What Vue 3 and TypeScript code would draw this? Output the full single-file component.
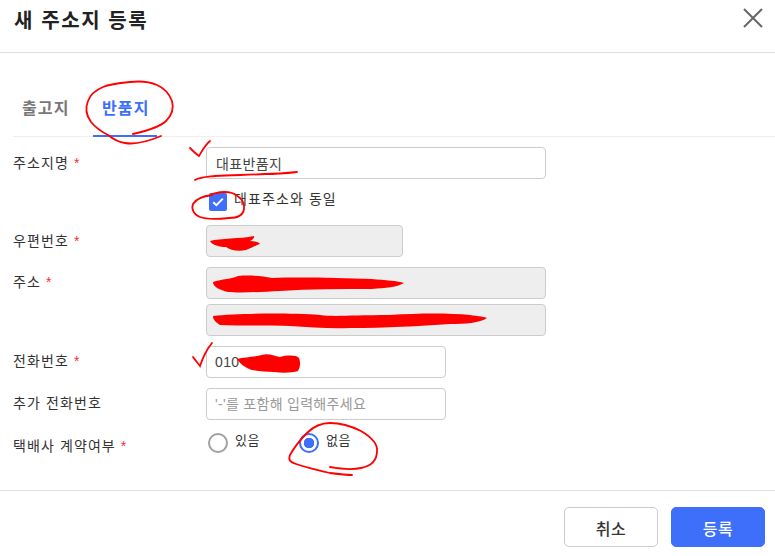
<script setup lang="ts">
interface Tab { label: string; active: boolean }
const tabs: Tab[] = [
  { label: '출고지', active: false },
  { label: '반품지', active: true },
]
const loops: string[] = [
  'M133 134C146 131 160 127 166 121C172 115 174 108 172 101C169 93 164 88 157 85C148 81 139 81 130 82C120 83 110 84 103 87C96 90 90 95 88 101C85 108 86 115 91 122C96 128 102 132 108 135C113 139 118 142 125 143C136 145 149 141 161 136',
  'M190 148C193 151 196 154 199 156C202 151 205 145 210 141',
  'M195 180C200 177 205 177 215 176C232 175 250 175 265 174C276 174 288 173 297 172',
  'M212 195C204 196 196 199 193 204C191 209 194 215 200 217C208 220 219 219 229 218C237 218 243 216 244 209C245 202 240 196 232 193C225 191 215 192 208 196',
  'M193 357C195 360 198 363 200 366C203 357 207 349 212 343',
  'M330 467C341 469 352 470 361 468C371 466 377 460 377 451C378 443 371 437 361 431C351 426 342 423 330 423C322 423 313 427 307 433C300 440 295 446 290 455C288 460 290 462 296 464C307 468 319 470 330 473C338 474 346 475 352 475',
]
const blobs: string[] = [
  'M210 241C220 238 240 239 254 236C255 238 252 240 250 241C254 241 259 242 260 244C254 246 252 248 246 250C238 252 230 250 226 247C220 247 212 245 210 241Z',
  'M213 282C222 279 232 279 238 276C250 275 262 276 272 278C300 277 340 278 372 279C385 280 398 281 404 283C398 287 385 288 372 289C340 289 310 289 280 291C262 292 240 293 228 292C220 290 213 287 213 282Z',
  'M213 316C240 313 290 313 320 315C335 317 350 315 390 315C420 313 450 313 470 315C478 316 486 317 487 318C480 323 465 324 450 324C420 326 385 328 350 328C330 329 310 327 290 326C270 325 240 326 220 325C216 322 213 320 213 316Z',
  'M237 359C245 357 255 357 262 355C268 353 274 356 280 357C288 355 296 355 299 358C301 363 300 368 298 371C292 373 282 373 274 372C265 372 258 371 252 370C246 368 240 364 237 359Z',
]
</script>

<template>
  <div class="dialog">
    <header class="head">
      <h1 class="title">새 주소지 등록</h1>
      <button class="close" type="button" aria-label="닫기">
        <svg width="20" height="20" viewBox="0 0 20 20">
          <path d="M1 1L19 19M19 1L1 19" fill="none" stroke="#666" stroke-width="2" />
        </svg>
      </button>
    </header>

    <nav class="tabs">
      <span v-for="tab in tabs" :key="tab.label" class="tab" :class="{ active: tab.active }">{{ tab.label }}</span>
    </nav>

    <form class="form" @submit.prevent>
      <div class="row">
        <label class="label tall">주소지명 <em>*</em></label>
        <input class="field wide" value="대표반품지" />
      </div>
      <div class="row check-row">
        <span></span>
        <label class="check">
          <span class="box">
            <svg width="12" height="10" viewBox="0 0 12 10">
              <path d="M1.2 5.2L4.4 8.2L10.8 1.6" fill="none" stroke="#fff" stroke-width="2" />
            </svg>
          </span>
          <span class="check-text">대표주소와 동일</span>
        </label>
      </div>
      <div class="row postal-row">
        <label class="label tall">우편번호 <em>*</em></label>
        <input class="field short off" readonly />
      </div>
      <div class="row addr-row">
        <label class="label">주소 <em>*</em></label>
        <div class="stack">
          <input class="field wide off" readonly />
          <input class="field wide off" readonly />
        </div>
      </div>
      <div class="row next">
        <label class="label">전화번호 <em>*</em></label>
        <input class="field mid" value="010" />
      </div>
      <div class="row next">
        <label class="label">추가 전화번호</label>
        <input class="field mid" placeholder="'-'를 포함해 입력해주세요" />
      </div>
      <div class="row radio-row">
        <label class="label">택배사 계약여부 <em>*</em></label>
        <div class="radios">
          <label class="radio"><span class="dot"></span><span class="radio-text">있음</span></label>
          <label class="radio"><span class="dot on"></span><span class="radio-text">없음</span></label>
        </div>
      </div>
    </form>

    <footer class="foot">
      <button class="btn" type="button">취소</button>
      <button class="btn primary" type="button">등록</button>
    </footer>

    <svg class="marks" width="775" height="556" viewBox="0 0 775 556">
      <path v-for="d in loops" :key="d" :d="d" fill="none" stroke="#f00" stroke-width="1.8" stroke-linecap="round" />
      <path v-for="d in blobs" :key="d" :d="d" fill="#f00" />
    </svg>
  </div>
</template>

<style scoped>
.dialog {
  position: relative;
  width: 775px;
  height: 556px;
  overflow: hidden;
  background: #fff;
  color: #333;
  font-family: "Liberation Sans", "Noto Sans CJK KR", sans-serif;
  font-size: 14px;
}
.head {
  height: 53px;
  box-sizing: border-box;
  border-bottom: 1px solid #e0e0e0;
  display: flex;
  justify-content: space-between;
  padding: 0 12px 0 14px;
}
.title {
  margin: 7px 0 0;
  font-size: 20px;
  line-height: 28px;
  font-weight: 700;
  color: #222;
  letter-spacing: 1.6px;
}
.close {
  margin-top: 8px;
  height: 22px;
  padding: 0;
  border: 0;
  background: none;
}
.tabs {
  margin: 0 0 0 13px;
  height: 84px;
  box-sizing: border-box;
  border-bottom: 1px solid #eee;
  display: flex;
  align-items: flex-end;
}
.tab {
  box-sizing: border-box;
  width: 80px;
  height: 44px;
  margin-bottom: -1px;
  padding-left: 9px;
  font-size: 16px;
  line-height: 32px;
  font-weight: 700;
  color: #777;
  letter-spacing: 1.1px;
}
.tab.active {
  width: 64px;
  color: #3d6ffa;
  border-bottom: 2px solid #3d6ffa;
}
.form {
  padding: 10px 0 0 13px;
}
.row {
  display: grid;
  grid-template-columns: 193px 1fr;
  align-items: start;
}
.label {
  font-size: 14px;
  line-height: 30px;
  letter-spacing: 1.1px;
}
.label.tall {
  line-height: 32px;
}
.label em {
  font-style: normal;
  color: #f03030;
}
.field {
  display: block;
  box-sizing: border-box;
  height: 32px;
  padding: 0 9px 0 8px;
  border: 1px solid #ccc;
  border-radius: 4px;
  outline: none;
  background: #fff;
  color: #444;
  font: inherit;
  font-size: 14px;
  letter-spacing: 0.4px;
}
.field::placeholder {
  color: #999;
  letter-spacing: 0.3px;
}
.wide { width: 340px; padding-left: 9px; }
.mid { width: 240px; }
.short { width: 197px; }
.off { background: #eee; }
.check-row { margin-top: 14px; }
.check {
  display: flex;
  align-items: center;
  gap: 7px;
  height: 18px;
  padding-left: 3px;
  letter-spacing: 1.1px;
}
.check-text {
  margin-top: -9px;
}
.box {
  width: 18px;
  height: 18px;
  border-radius: 2px;
  background: #3d6ffa;
  display: flex;
  align-items: center;
  justify-content: center;
}
.postal-row { margin-top: 14px; }
.addr-row { margin-top: 10px; }
.stack {
  display: flex;
  flex-direction: column;
  gap: 5px;
}
.next { margin-top: 10px; }
.radio-row { margin-top: 11px; }
.radios {
  display: flex;
  padding-left: 2px;
  height: 24px;
  align-items: center;
}
.radio {
  display: flex;
  align-items: center;
  width: 91px;
  gap: 7px;
  font-size: 13px;
  letter-spacing: 0.6px;
}
.radio-text {
  margin-top: -7px;
}
.dot {
  box-sizing: border-box;
  width: 20px;
  height: 20px;
  border-radius: 50%;
  border: 2px solid #a0a0a0;
  background: #fff;
}
.dot.on {
  border-color: #3d6ffa;
  background: radial-gradient(circle, #3d6ffa 0 5px, #fff 5.5px);
}
.foot {
  position: absolute;
  left: 0;
  right: 0;
  top: 490px;
  border-top: 1px solid #e0e0e0;
  padding: 16px 10px 0 0;
  display: flex;
  justify-content: flex-end;
  gap: 13px;
}
.btn {
  width: 94px;
  height: 40px;
  padding: 2px 0 0;
  border: 1px solid #ccc;
  border-radius: 5px;
  background: #fff;
  color: #333;
  font: inherit;
  font-size: 16px;
  font-weight: 500;
  letter-spacing: 0.5px;
}
.primary {
  border-color: #3d6ffa;
  background: #3d6ffa;
  color: #fff;
}
.marks {
  position: absolute;
  left: 0;
  top: 0;
  pointer-events: none;
}
</style>
